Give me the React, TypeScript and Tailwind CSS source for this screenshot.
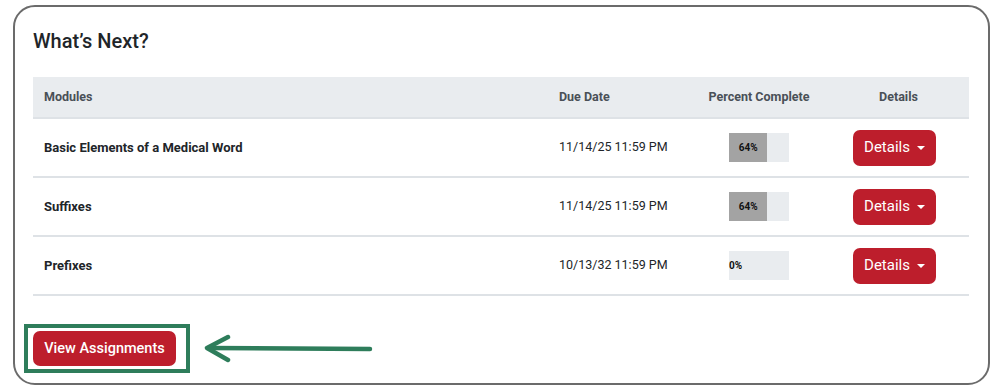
import React from 'react'

const rows = [
  { name: 'Basic Elements of a Medical Word', due: '11/14/25 11:59 PM', pct: 64 },
  { name: 'Suffixes', due: '11/14/25 11:59 PM', pct: 64 },
  { name: 'Prefixes', due: '10/13/32 11:59 PM', pct: 0 },
]

const Progress = ({ pct }: { pct: number }) => (
  <div className="mx-auto flex h-[29px] w-[60px] bg-[#e9ecef]">
    <div
      className="flex h-full items-center justify-center bg-[#a3a3a3] text-[10px] font-bold text-[#111]"
      style={{ width: `${pct}%` }}
    >
      {pct > 0 && `${pct}%`}
    </div>
    {pct === 0 && <span className="flex items-center text-[10px] font-bold text-[#111]">0%</span>}
  </div>
)

const DetailsButton = () => (
  <button className="ml-[25px] flex h-[36px] w-[83px] items-center justify-center gap-[7px] rounded-[7px] bg-[#bd1e2c] text-[15px] text-white">
    Details
    <span className="mt-[1px] h-0 w-0 border-x-[4px] border-t-[4px] border-x-transparent border-t-white" />
  </button>
)

export default function App() {
  return (
    <div className="h-[388px] w-[1001px] bg-white pl-[13px] pt-[5px]" style={{ fontFamily: 'Roboto, "Liberation Sans", sans-serif' }}>
      <div className="h-[380px] w-[977px] rounded-[22px] border-2 border-[#6b6b6b] pl-[18px] pr-[18px] pt-[22px]">
        <h2 className="text-[20px] font-medium leading-[24px] text-[#212529]">What’s Next?</h2>

        <table className="mt-[24px] w-[936px] border-collapse text-[12.5px]">
          <thead>
            <tr className="h-[41px] bg-[#e9ecef] text-[#495057]">
              <th className="w-[515px] pl-[11px] text-left font-bold">Modules</th>
              <th className="w-[142px] pl-[11px] text-left font-bold">Due Date</th>
              <th className="w-[138px] text-center font-bold">Percent Complete</th>
              <th className="w-[141px] text-center font-bold">Details</th>
            </tr>
          </thead>
          <tbody>
            {rows.map((r) => (
              <tr key={r.name} className="h-[59px] border-t-2 border-[#dee2e6] last:border-b-2">
                <td className="pl-[11px] text-[13px] font-bold text-[#212529]">{r.name}</td>
                <td className="pl-[11px] text-[#212529]">{r.due}</td>
                <td>
                  <Progress pct={r.pct} />
                </td>
                <td>
                  <DetailsButton />
                </td>
              </tr>
            ))}
          </tbody>
        </table>

        <div className="mt-[28px] flex items-center">
          <div className="-ml-[9px] border-4 border-[#2e7d5b] py-[3px] pl-[5px] pr-[10px]">
            <button className="h-[35px] w-[143px] rounded-[7px] bg-[#bd1e2c] text-[14.5px] font-medium text-white">
              View Assignments
            </button>
          </div>
          <svg width="172" height="30" viewBox="0 0 172 30" className="ml-[13px]">
            <g stroke="#2e7d5b" strokeWidth="4.5" strokeLinecap="round" strokeLinejoin="round" fill="none">
              <line x1="5" y1="14" x2="167" y2="15" />
              <polyline points="25,3 4,14 25,26" />
            </g>
          </svg>
        </div>
      </div>
    </div>
  )
}
